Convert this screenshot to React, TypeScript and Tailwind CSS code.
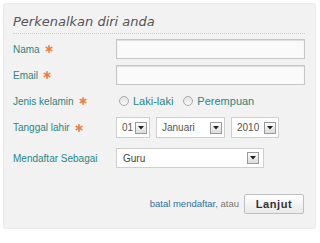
import * as React from "react"

function Arrow() {
  return (
    <span className="flex h-[12px] w-[12px] shrink-0 items-center justify-center border border-[#9a9a9a] bg-gradient-to-b from-[#fdfdfd] to-[#dcdcdc]">
      <svg width="6" height="4" viewBox="0 0 6 4">
        <path d="M0 0 L6 0 L3 3.5 Z" fill="#222" />
      </svg>
    </span>
  )
}

function Star() {
  return (
    <svg className="ml-[5px]" width="8" height="8" viewBox="0 0 8 8">
      <g stroke="#f07a3c" strokeWidth="1.6" strokeLinecap="round">
        <path d="M4 0.8 V7.2" />
        <path d="M1.2 2.4 L6.8 5.6" />
        <path d="M1.2 5.6 L6.8 2.4" />
      </g>
    </svg>
  )
}

function Select({ value, width }: { value: string; width: string }) {
  return (
    <div className={`flex h-[21px] items-center justify-between border border-[#cfcfcf] bg-white pl-[5px] pr-[2px] ${width}`}>
      <span className="text-[10px] text-[#555]">{value}</span>
      <Arrow />
    </div>
  )
}

function Label({ text, required }: { text: string; required?: boolean }) {
  return (
    <div className="flex w-[103px] shrink-0 items-center text-[10px] text-[#2c8585]">
      <span>{text}</span>
      {required && <Star />}
    </div>
  )
}

function Radio({ label }: { label: string }) {
  return (
    <label className="flex items-center gap-[4px] text-[11px] text-[#2c8585]">
      <span className="h-[10px] w-[10px] rounded-full border border-[#aaa] bg-gradient-to-b from-[#e0e0e0] to-[#fafafa]" />
      {label}
    </label>
  )
}

export default function App() {
  return (
    <div className="h-[243px] w-[320px] bg-white pl-[3px] pt-[3px]" style={{ fontFamily: "'Liberation Sans', Arial, sans-serif" }}>
      <div className="h-[226px] w-[313px] rounded-[2px] border border-[#ebebeb] bg-[#f2f2f2] pl-[9px] pr-[10px]">
        <div className="border-b border-dotted border-[#cccccc] pb-[3px] pt-[10px] text-[13px] italic leading-[16px] text-[#555]" style={{ fontFamily: "'DejaVu Sans', sans-serif" }}>
          Perkenalkan diri anda
        </div>

        <div className="mt-[5px] flex h-[20px] items-center">
          <Label text="Nama" required />
          <div className="h-[20px] flex-1 border border-[#c6c6c6] bg-[#fafafa] shadow-[inset_0_1px_1px_rgba(0,0,0,0.12)]" />
        </div>

        <div className="mt-[6px] flex h-[20px] items-center">
          <Label text="Email" required />
          <div className="h-[20px] flex-1 border border-[#c6c6c6] bg-[#fafafa] shadow-[inset_0_1px_1px_rgba(0,0,0,0.12)]" />
        </div>

        <div className="mt-[6px] flex h-[20px] items-center">
          <Label text="Jenis kelamin" required />
          <div className="ml-[3px] flex items-center gap-[10px]">
            <Radio label="Laki-laki" />
            <Radio label="Perempuan" />
          </div>
        </div>

        <div className="mt-[6px] flex h-[21px] items-center">
          <Label text="Tanggal lahir" required />
          <div className="flex items-center gap-[6px]">
            <Select value="01" width="w-[34px]" />
            <Select value="Januari" width="w-[69px]" />
            <Select value="2010" width="w-[48px]" />
          </div>
        </div>

        <div className="mt-[10px] flex h-[20px] items-center">
          <Label text="Mendaftar Sebagai" />
          <div className="flex h-[20px] w-[148px] items-center justify-between border border-[#cfcfcf] bg-white pl-[6px] pr-[4px]">
            <span className="text-[10px] text-[#444]">Guru</span>
            <Arrow />
          </div>
        </div>

        <div className="mt-[26px] flex items-center justify-end pr-[1px]">
          <span className="text-[9.5px] text-[#777]">
            <a className="text-[#2f6f9f]">batal mendaftar</a>, atau
          </span>
          <button className="ml-[5px] h-[20px] w-[60px] rounded-[2px] border border-[#c0c0c0] bg-gradient-to-b from-white to-[#e9e9e9] text-[11px] font-bold tracking-[0.6px] text-[#333]">
            Lanjut
          </button>
        </div>
      </div>
    </div>
  )
}
